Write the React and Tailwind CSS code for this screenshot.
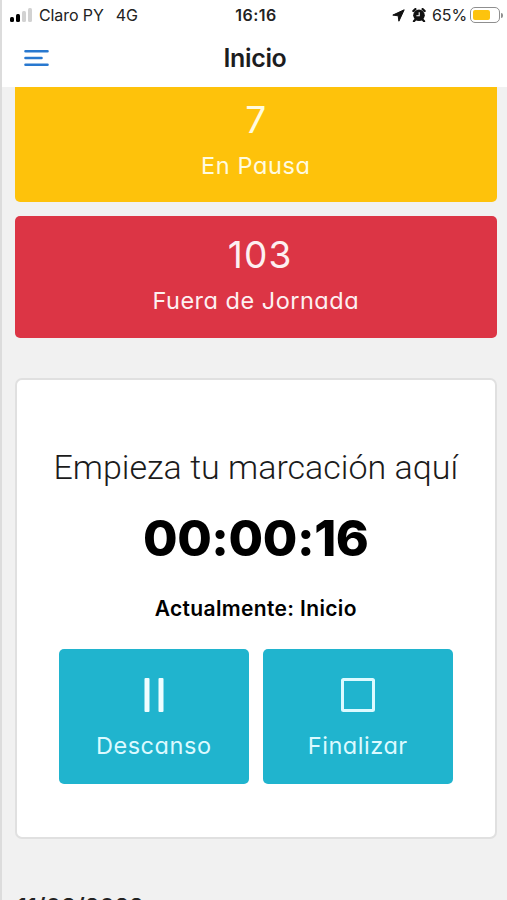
import React from 'react';

const counters = [
    { value: '7', label: 'En Pausa', box: 'h-[121px] -mt-[6px] bg-[#fec20b]', text: 'text-[#fffbe0]', valueStyle: '', labelStyle: 'tracking-[0.6px]' },
    { value: '103', label: 'Fuera de Jornada', box: 'h-[122px] mt-[14px] bg-[#dc3545]', text: 'text-[#fdf0f1]', valueStyle: 'tracking-[1.2px] pl-[9px]', labelStyle: 'tracking-[0.5px]' },
];

function StatusBar() {
    return (
        <div className="h-[30px] grid grid-cols-[1fr_auto_1fr] items-center pl-[8px] pr-[4px] text-[16px] text-[#222]">
            <div className="flex items-center">
                <div className="flex items-end gap-[2px] h-[14px] w-[24px] -mt-[1px] mr-[5px]">
                    <span className="w-[4px] h-[5px] rounded-[1.5px] bg-black" />
                    <span className="w-[4px] h-[8px] rounded-[1.5px] bg-black" />
                    <span className="w-[4px] h-[11px] rounded-[1.5px] bg-[#d2d2d2]" />
                    <span className="w-[4px] h-[14px] rounded-[1.5px] bg-[#d2d2d2]" />
                </div>
                <span className="tracking-[-0.1px]">Claro PY</span>
                <span className="ml-[12px]">4G</span>
            </div>
            <span className="-ml-[1px] font-semibold tracking-[0.45px]">16:16</span>
            <div className="flex items-center justify-end">
                <svg width="13" height="13" viewBox="0 0 13 13" className="mr-[7px]">
                    <path d="M12.2 0.8L0.8 6.1L6.2 6.8L6.9 12.2Z" fill="#111" stroke="#111" strokeWidth="1" strokeLinejoin="round" />
                </svg>
                <svg width="14" height="14" viewBox="0 0 14 14" className="mr-[6px]">
                    <path d="M3 12L1.9 13.2M11 12L12.1 13.2M1.3 3L3.4 1.1M12.7 3L10.6 1.1" stroke="#111" strokeWidth="2.2" strokeLinecap="round" />
                    <circle cx="7" cy="7.3" r="5.8" fill="#111" />
                    <path d="M7.2 4.2V7.7H4.4" fill="none" stroke="#fff" strokeWidth="1.1" />
                </svg>
                <span className="tracking-[-0.1px]">65%</span>
                <div className="ml-[3px] w-[30px] h-[16px] rounded-[5px] border border-[#8f8f8f] p-[2px]">
                    <div className="w-[17px] h-full rounded-[2px] bg-[#fdc30d]" />
                </div>
                <div className="ml-[1px] w-[2px] h-[5px] rounded-r-full bg-[#8f8f8f]" />
            </div>
        </div>
    );
}

function Header() {
    return (
        <header className="h-[57px] grid grid-cols-[1fr_auto_1fr] items-center pl-[22px] pr-[21px] pb-[2px]">
            <svg width="25" height="18" viewBox="0 0 25 18" fill="none" stroke="#2878cf" strokeWidth="2.6" strokeLinecap="round">
                <path d="M1.5 2.2H23.5M1.5 9H17.5M1.5 15.8H23.5" />
            </svg>
            <h1 className="text-[25px] leading-[30px] font-semibold text-[#1c1c1e] tracking-[-0.35px]">Inicio</h1>
        </header>
    );
}

function ActionButton({ label, children }) {
    return (
        <button className="w-[190px] h-[135px] rounded-[5px] bg-[#20b4ce] text-[#dcfaff] flex flex-col items-center pt-[28px]">
            {children}
            <span className="mt-[19px] text-[23.5px] leading-[28px] tracking-[0.55px]">{label}</span>
        </button>
    );
}

export default function App() {
    return (
        <div className="w-full h-[900px] overflow-hidden flex flex-col border-l-2 border-[#dcdcdc] bg-[#f1f1f1] font-['Inter',sans-serif] [font-feature-settings:'cv11']">
            <div className="bg-white shrink-0 [font-feature-settings:normal]">
                <StatusBar />
                <Header />
            </div>

            <main className="flex-1 min-h-0 overflow-hidden pl-[13px] pr-[10.5px]">
                {counters.map((c) => (
                    <div key={c.label} className={`${c.box} ${c.text} rounded-[5px] flex flex-col items-center pt-[17px]`}>
                        <div className={`text-[37px] leading-[44px] font-normal ${c.valueStyle}`}>{c.value}</div>
                        <div className={`mt-[10px] text-[23.5px] leading-[28px] ${c.labelStyle}`}>{c.label}</div>
                    </div>
                ))}

                <section className="mt-[40px] h-[461px] bg-white border-2 border-[#e0e0e0] rounded-[7px] flex flex-col items-center pt-[66px]">
                    <h2 className="font-['Roboto',sans-serif] font-light text-[34px] leading-[42px] text-[#1b1b1b] whitespace-nowrap">Empieza tu marcación aquí</h2>
                    <div className="mt-[20px] text-[50px] leading-[60px] font-extrabold text-black tracking-[-0.4px]">00:00:16</div>
                    <p className="mt-[28px] text-[21px] leading-[26px] font-semibold text-black tracking-[0.35px] [font-feature-settings:normal]">Actualmente: Inicio</p>
                    <div className="mt-[27px] flex gap-[14px]">
                        <ActionButton label="Descanso">
                            <svg width="36" height="36" viewBox="0 0 36 36" fill="#effdff">
                                <rect x="8.5" y="1" width="5" height="34" rx="1" />
                                <rect x="22.5" y="1" width="5" height="34" rx="1" />
                            </svg>
                        </ActionButton>
                        <ActionButton label="Finalizar">
                            <svg width="36" height="36" viewBox="0 0 36 36" fill="none" stroke="#dcfaff" strokeWidth="3">
                                <rect x="2.5" y="2.5" width="31" height="31" rx="1" />
                            </svg>
                        </ActionButton>
                    </div>
                </section>

                <div className="mt-[54px] ml-[2px] text-[23px] leading-[28px] font-semibold text-[#222] tracking-[0.2px] whitespace-nowrap">11/03/2022</div>
            </main>
        </div>
    );
}
